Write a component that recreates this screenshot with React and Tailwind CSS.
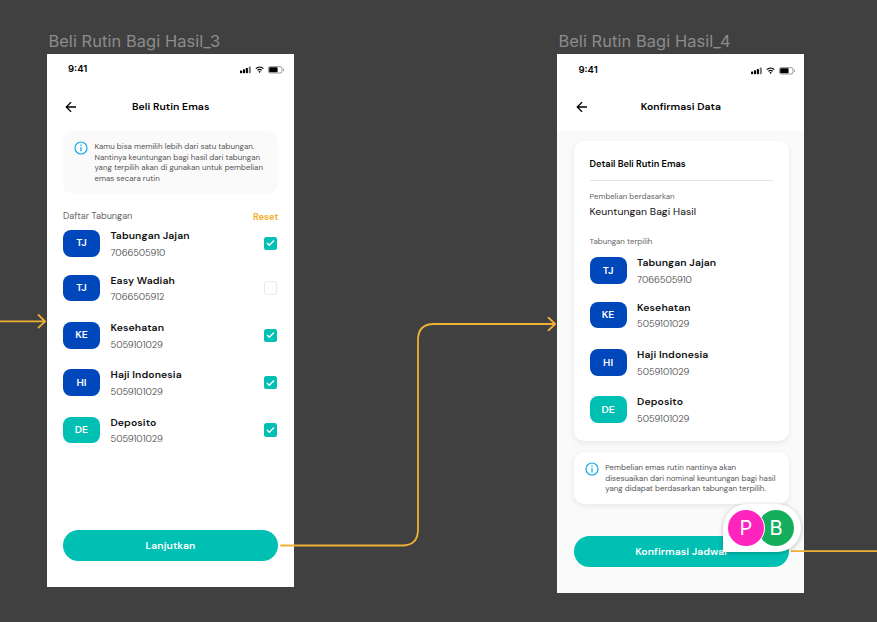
import React from "react";

function StatusBar({ className }) {
  return (
    <div className={`flex items-center justify-between ${className}`}>
      <span className="font-['Inter',sans-serif] text-[9.6px] leading-3 font-semibold">9:41</span>
      <svg width="46" height="12" viewBox="0 0 46 12" className="mr-[8.5px]">
        <g fill="#000">
          <rect x="1" y="7.4" width="2.1" height="2.8" rx="0.6" />
          <rect x="3.9" y="6.3" width="2.1" height="3.9" rx="0.6" />
          <rect x="6.8" y="5" width="2.1" height="5.2" rx="0.6" />
          <rect x="9.8" y="3.6" width="2" height="6.6" rx="0.6" opacity="0.55" />
        </g>
        <g fill="none" stroke="#000" strokeWidth="1.1">
          <path d="M16.8 5.6a5.6 5.6 0 0 1 7.6 0" />
          <path d="M18.4 7.4a3.2 3.2 0 0 1 4.4 0" />
        </g>
        <path d="M19.4 8.5a2 2 0 0 1 2.4 0l-1.2 1.5z" />
        <rect x="29.4" y="3.6" width="13.6" height="6.4" rx="1.8" fill="none" stroke="#000" strokeOpacity="0.45" strokeWidth="0.9" />
        <rect x="30.2" y="4.3" width="8.4" height="5" rx="0.8" />
        <path d="M44 5.6q1.1.4 1.1 1.2t-1.1 1.2z" opacity="0.45" />
      </svg>
    </div>
  );
}

function Header({ title, className }) {
  return (
    <div className={`relative flex items-center justify-center ${className}`}>
      <svg width="12" height="12" viewBox="0 0 12 12" className="absolute left-0" fill="none" stroke="#000" strokeWidth="1.35">
        <path d="M11 6H1.4M6.1 1.1 1.3 6l4.8 4.9" />
      </svg>
      <h1 className="text-[10.4px] leading-4 font-semibold tracking-[0.08px]">{title}</h1>
    </div>
  );
}

function InfoIcon() {
  return (
    <svg width="14" height="14" viewBox="0 0 14 14" className="shrink-0">
      <circle cx="7" cy="7" r="6" fill="none" stroke="#12aeea" strokeWidth="1.2" />
      <rect x="6.35" y="3.6" width="1.3" height="1.4" fill="#12aeea" />
      <rect x="6.35" y="6.1" width="1.3" height="4.3" fill="#12aeea" />
    </svg>
  );
}

function Account({ code, name, number, teal, children }) {
  return (
    <div className="flex h-[34px] items-start">
      <div
        className={`mt-[3px] flex h-[26.6px] w-[37px] items-center justify-center rounded-[8px] text-[10.4px] font-semibold text-white ${
          teal ? "bg-[#00bfb3]" : "bg-[#0047bb]"
        }`}
      >
        {code}
      </div>
      <div className="ml-[10.5px] flex-1">
        <div className="text-[10.4px] leading-[17px] font-semibold tracking-[0.1px] text-[#111]">{name}</div>
        <div className="pt-[0.6px] text-[9.3px] leading-[17px] font-light text-[#444]">{number}</div>
      </div>
      {children}
    </div>
  );
}

function Checkbox({ checked }) {
  return checked ? (
    <div className="mt-[9.6px] mr-[1px] flex size-[13.4px] items-center justify-center rounded-[2.5px] bg-[#00bfb3]">
      <svg width="9" height="8" viewBox="0 0 9 8" fill="none" stroke="#fff" strokeWidth="1.4">
        <path d="M1 4l2.3 2.3L8 1.6" />
      </svg>
    </div>
  ) : (
    <div className="mt-[9.6px] mr-[1px] size-[13.4px] rounded-[2.5px] border border-[#e9e9e9] bg-white" />
  );
}

function Label({ children }) {
  return (
    <div className="h-[13px] pl-[1px] font-['Inter',sans-serif] text-[16.4px] leading-[13px] tracking-[0.08px] whitespace-nowrap text-[#8c8c8c]">
      {children}
    </div>
  );
}

function Button({ children }) {
  return (
    <button className="flex h-[31.6px] w-[215px] items-center justify-center rounded-full bg-[#00bfb3] text-[10.4px] font-semibold tracking-[0.08px] text-white">
      {children}
    </button>
  );
}

export default function App() {
  return (
    <div className="relative h-[622px] w-[877px] overflow-hidden bg-[#404040] font-['DM_Sans','Inter',sans-serif] text-black">
      <section className="absolute top-[35px] left-[47.4px] w-[246.6px]">
        <Label>Beli Rutin Bagi Hasil_3</Label>
        <div className="mt-[6.3px] flex h-[533.2px] flex-col bg-white px-[15.6px]">
          <StatusBar className="mt-[9px] h-3 pl-[5px] -mr-[15.6px]" />
          <Header title="Beli Rutin Emas" className="mt-[23.5px] ml-[2.5px] h-4 mr-[2.5px]" />
          <div className="mt-4 flex h-[62.8px] rounded-[10px] bg-[#fafafa] pt-[10.7px] pl-[11.5px]">
            <InfoIcon />
            <p className="ml-[6px] text-[7.88px] leading-[10.5px] whitespace-nowrap text-[#555]">
              Kamu bisa memilih lebih dari satu tabungan.<br />
              Nantinya keuntungan bagi hasil dari tabungan<br />
              yang terpilih akan di gunakan untuk pembelian<br />
              emas secara rutin
            </p>
          </div>
          <div className="mt-[15px] flex h-[16px] items-center justify-between text-[9.1px]">
            <span className="text-[#666]">Daftar Tabungan</span>
            <span className="pt-[2px] text-[9.2px] font-bold text-[#f3b334]">Reset</span>
          </div>
          <div className="mt-[2.4px] flex flex-col">
            <Account code="TJ" name="Tabungan Jajan" number="7066505910"><Checkbox checked /></Account>
            <div className="mt-[10.7px] flex flex-col gap-[13.3px]">
              <Account code="TJ" name="Easy Wadiah" number="7066505912"><Checkbox /></Account>
              <Account code="KE" name="Kesehatan" number="5059101029"><Checkbox checked /></Account>
              <Account code="HI" name="Haji Indonesia" number="5059101029"><Checkbox checked /></Account>
              <Account code="DE" name="Deposito" number="5059101029" teal><Checkbox checked /></Account>
            </div>
          </div>
          <div className="mt-auto mb-[26px]"><Button>Lanjutkan</Button></div>
        </div>
      </section>

      <section className="absolute top-[35px] left-[557.4px] w-[247px]">
        <Label>Beli Rutin Bagi Hasil_4</Label>
        <div className="mt-[6.3px] flex h-[539px] flex-col bg-[#fafafa]">
          <div className="h-[76.5px] bg-white px-[16px]">
            <StatusBar className="pt-[9.5px] pl-[5px] -mr-[16px]" />
            <Header title="Konfirmasi Data" className="mt-[23px] ml-[2.5px] h-4 mr-[2.5px]" />
          </div>
          <div className="mr-[15.8px] ml-[16.4px] mt-[10.2px] h-[300px] rounded-[10px] bg-white px-[15.8px] pt-[15px] shadow-[0_2px_6px_rgba(0,0,0,0.08)]">
            <h2 className="text-[9.25px] leading-4 font-semibold">Detail Beli Rutin Emas</h2>
            <div className="mt-[8px] h-px bg-[#e2e2e2]" />
            <div className="mt-[9.2px] text-[7.88px] leading-[12px] text-[#666]">Pembelian berdasarkan</div>
            <div className="mt-[2.3px] text-[10.4px] leading-4 tracking-[0.05px] text-[#111]">Keuntungan Bagi Hasil</div>
            <div className="mt-[14.5px] text-[7.88px] leading-[12px] text-[#666]">Tabungan terpilih</div>
            <div className="mt-[7.2px]">
              <Account code="TJ" name="Tabungan Jajan" number="7066505910" />
              <div className="mt-[10.7px] flex flex-col gap-[13.3px]">
                <Account code="KE" name="Kesehatan" number="5059101029" />
                <Account code="HI" name="Haji Indonesia" number="5059101029" />
                <Account code="DE" name="Deposito" number="5059101029" teal />
              </div>
            </div>
          </div>
          <div className="mr-[15.8px] ml-[16.4px] mt-[10.7px] flex h-[52.3px] rounded-[10px] bg-white pt-[10.5px] pl-[11.5px] shadow-[0_2px_6px_rgba(0,0,0,0.08)]">
            <InfoIcon />
            <p className="ml-[6px] text-[7.88px] leading-[10.5px] whitespace-nowrap text-[#555]">
              Pembelian emas rutin nantinya akan<br />
              disesuaikan dari nominal keuntungan bagi hasil<br />
              yang didapat berdasarkan tabungan terpilih.
            </p>
          </div>
          <div className="mt-auto mb-[26px] ml-[16.2px]"><Button>Konfirmasi Jadwal</Button></div>
        </div>
      </section>

      <svg className="absolute inset-0" width="877" height="622" viewBox="0 0 877 622" fill="none" stroke="#efb034" strokeWidth="1.8" strokeLinecap="round" strokeLinejoin="round">
        <path d="M0 321.3H45M38.5 315l6.6 6.3-6.6 6.3" />
        <path d="M281 545.5H402Q418 545.5 418 529.5V340Q418 324 434 324H555M548.5 317.7l6.6 6.3-6.6 6.3" />
        <path d="M791.5 551.2H877" />
      </svg>

      <div className="absolute top-[504px] left-[722.7px] flex h-[48px] w-[78px] items-center rounded-[24px] rounded-bl-none bg-white pl-[5.3px] font-['Inter',sans-serif] text-[20px] text-white shadow-[0_1px_4px_rgba(0,0,0,0.25)]">
        <div className="z-10 flex size-[36px] items-center justify-center rounded-full bg-[#ff24bd] ring-1 ring-white">P</div>
        <div className="-ml-[6px] flex size-[36px] items-center justify-center rounded-full bg-[#14ae5c]">B</div>
      </div>
    </div>
  );
}
